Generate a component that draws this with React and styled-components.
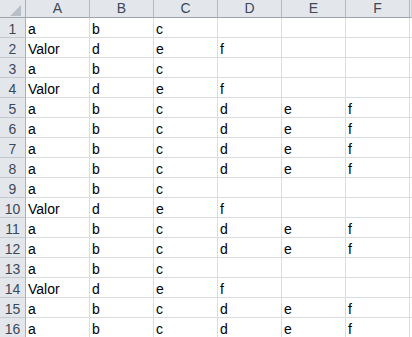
import React from "react";
import styled, { createGlobalStyle } from "styled-components";

const Global = createGlobalStyle`
  html, body { margin: 0; padding: 0; background: #ffffff; overflow: hidden; }
  body { font-family: "Liberation Sans", Arial, sans-serif; }
`;

const Sheet = styled.div`
  display: grid;
  grid-template-columns: 26px repeat(6, 64px) minmax(0, 1fr);
  grid-template-rows: 18px;
  grid-auto-rows: 20px;
  width: 100%;
  overflow: hidden;
`;

const Corner = styled.div`
  position: relative;
  box-sizing: border-box;
  background: #e3e7ec;
  border-right: 1px solid #a9b0b8;
  border-bottom: 1px solid #9ea4ab;
`;

const CornerMark = styled.svg`
  position: absolute;
  left: 10px;
  top: 5px;
`;

const ColHead = styled.div`
  box-sizing: border-box;
  background: #e3e7ec;
  border-right: 1px solid ${(p) => (p.$last ? "#cfd3d8" : "#b4bac1")};
  border-bottom: 1px solid #9ea4ab;
  color: #3d4758;
  font-size: 14px;
  line-height: 17px;
  text-align: center;
  overflow: hidden;
`;

const RowHead = styled.div`
  box-sizing: border-box;
  background: #e3e7ec;
  border-right: 1px solid #a9b0b8;
  border-bottom: 1px solid #c5cad0;
  color: #3d4758;
  font-size: 14px;
  line-height: 22px;
  text-align: center;
`;

const Cell = styled.div`
  box-sizing: border-box;
  border-right: 1px solid #dadcdf;
  border-bottom: 1px solid #dadcdf;
  color: #000000;
  font-size: 14px;
  line-height: 22px;
  padding-left: 2px;
  white-space: nowrap;
  overflow: hidden;
`;

const full = ["a", "b", "c", "d", "e", "f"];
const short = ["a", "b", "c", "", "", ""];
const valor = ["Valor", "d", "e", "f", "", ""];

const rows = [
  short, valor, short, valor, full, full, full, full,
  short, valor, full, full, short, valor, full, full,
];

const cols = ["A", "B", "C", "D", "E", "F"];

export default function App() {
  return (
    <>
      <Global />
      <Sheet>
        <Corner>
          <CornerMark width="11" height="11" viewBox="0 0 11 11">
            <polygon points="11,0 11,11 0,11" fill="#b9bfc6" />
          </CornerMark>
        </Corner>
        {cols.map((c) => (
          <ColHead key={c}>{c}</ColHead>
        ))}
        <ColHead $last />
        {rows.map((r, i) => (
          <React.Fragment key={i}>
            <RowHead>{i + 1}</RowHead>
            {r.map((v, j) => (
              <Cell key={j}>{v}</Cell>
            ))}
            <Cell />
          </React.Fragment>
        ))}
      </Sheet>
    </>
  );
}
